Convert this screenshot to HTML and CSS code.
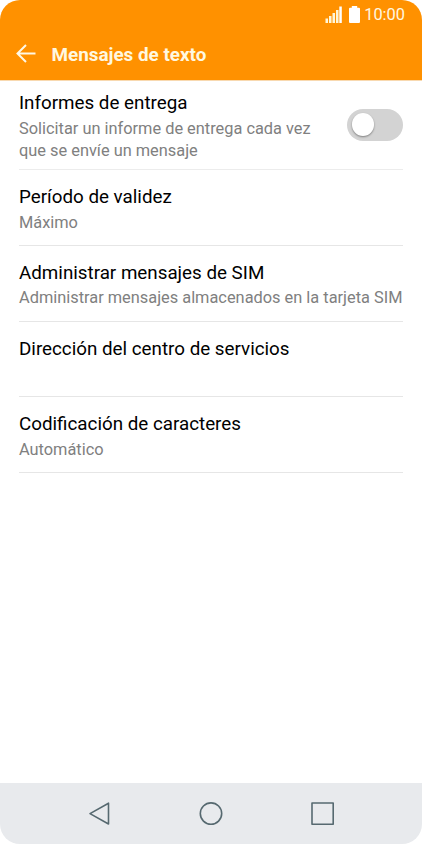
FILE: index.html
```html
<!DOCTYPE html>
<html lang="es">
<head>
<meta charset="utf-8">
<title>Mensajes de texto</title>
<link rel="stylesheet" href="styles.css">
</head>
<body>
<div class="phone">
  <header class="header">
    <div class="status">
      <svg class="signal" width="17" height="17" viewBox="0 0 17 17" fill="#fff6d8"><path d="M.5 12.500h2.500V17H.5zM4 10h2.500v7H4zM7.500 7H10v10H7.500zM11 4h2.500v13H11z"/><path fill="#fff" d="M14.300 .5h2.500V17h-2.500z"/></svg>
      <svg class="battery" width="11" height="17" viewBox="0 0 11 17" fill="#fff"><path d="M2.800 0h5.400v1.800H10q1 0 1 1V16q0 1-1 1H1q-1 0-1-1V2.800q0-1 1-1h1.800z"/></svg>
      <span class="clock">10:00</span>
    </div>
    <div class="appbar">
      <svg class="back" width="20" height="20" viewBox="0 0 20 20" fill="none" stroke="#fff8e6" stroke-width="2"><path d="M19.500 9.500H2M10 1L1.500 9.500l8.500 8.500"/></svg>
      <h1 class="title">Mensajes de texto</h1>
    </div>
  </header>
  <main class="list">
    <section class="row row-first">
      <div class="copy"><h2>Informes de entrega</h2><p>Solicitar un informe de entrega cada vez<br>que se envíe un mensaje</p></div>
      <div class="switch"><div class="knob"></div></div>
    </section>
    <section class="row"><div class="copy"><h2>Período de validez</h2><p>Máximo</p></div></section>
    <section class="row"><div class="copy"><h2>Administrar mensajes de SIM</h2><p>Administrar mensajes almacenados en la tarjeta SIM</p></div></section>
    <section class="row"><div class="copy"><h2>Dirección del centro de servicios</h2></div></section>
    <section class="row"><div class="copy"><h2>Codificación de caracteres</h2><p>Automático</p></div></section>
  </main>
  <nav class="nav">
    <svg width="24" height="24" viewBox="0 0 24 24"><path d="M20.500 1.200v20.800L2 11.600z"/></svg>
    <svg width="24" height="24" viewBox="0 0 24 24"><circle cx="12" cy="11.600" r="10.700"/></svg>
    <svg width="24" height="24" viewBox="0 0 24 24"><path d="M1 1h21.200v21.200H1z"/></svg>
  </nav>
</div>
</body>
</html>
```
FILE: styles.css
```css
* { box-sizing: border-box; }
body { margin: 0; background: #fff; font-family: Roboto, sans-serif; }
h1, h2, p { margin: 0; }
svg { display: block; }
.phone { width: 422px; height: 844px; display: flex; flex-direction: column; overflow: hidden; border-radius: 20px; background: #fff; }
.header { height: 81px; flex: none; background: #ff9100; color: #fff8e0; border-bottom: 1px solid #f8d9b0; }
.status { height: 30px; display: flex; align-items: center; justify-content: flex-end; padding-right: 17px; }
.signal, .battery { margin-top: -2px; }
.battery { margin-left: 7px; }
.clock { margin-left: 4px; font-size: 16.400px; line-height: 30px; }
.appbar { height: 49px; display: flex; align-items: center; padding-left: 16px; }
.back { margin-top: -2px; }
.title { margin-left: 15.500px; font-size: 18.850px; font-weight: 700; line-height: 24px; }
.list { flex: 1; padding: 0 19px; }
.row { height: 75.750px; border-bottom: 1px solid #e6e6e6; display: flex; justify-content: space-between; padding-top: 14px; }
.row-first { height: 89px; padding-top: 9px; border-bottom-color: #ececec; }
h2 { font-size: 18.800px; font-weight: 400; line-height: 26px; color: #000; white-space: nowrap; }
p { font-size: 16.380px; line-height: 22px; margin-top: 1.500px; color: #808080; white-space: nowrap; }
.row-first p { margin-top: 2px; }
.switch { width: 56px; height: 32px; flex: none; margin-top: 18.500px; padding: 4.500px; border-radius: 16px; background: #d3d3d3; }
.knob { width: 22.500px; height: 22.500px; border-radius: 50%; background: #fff; box-shadow: 0 1px 2px rgba(0, 0, 0, .4); }
.nav { height: 61px; flex: none; background: #e8eaed; display: flex; justify-content: center; align-items: center; gap: 87.500px; }
.nav svg { fill: none; stroke: #566970; stroke-width: 1.600; stroke-linejoin: round; }
```
